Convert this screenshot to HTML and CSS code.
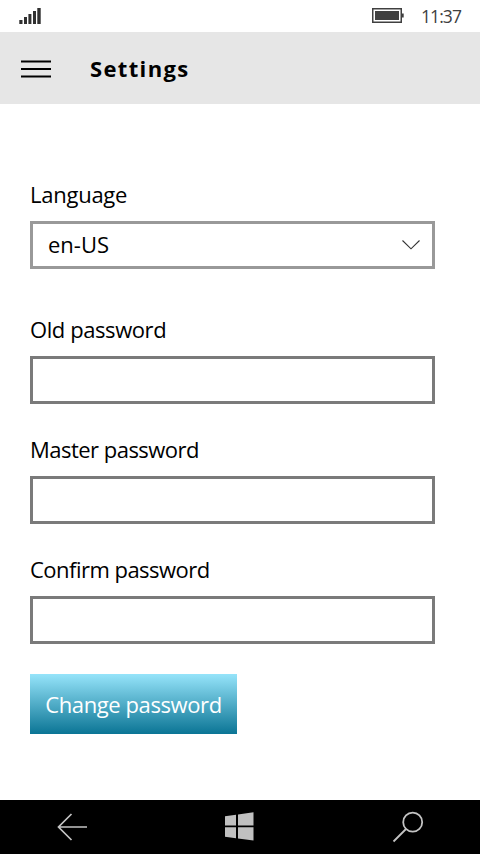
FILE: index.html
```html
<!DOCTYPE html>
<html lang="en-US">
<head>
<meta charset="utf-8">
<title>Settings</title>
<link rel="stylesheet" href="styles.css">
</head>
<body>
<div class="phone">
  <div class="status">
    <svg class="signal" width="23" height="18" viewBox="0 0 23 18" fill="#303030"><path d="M.3 13h3.200v4H.3zM5 10h3v7H5zM9.400 7h3v10h-3zM14 4h3v13h-3zM18.300 1h3.400v16h-3.400z"/></svg>
    <svg class="battery" width="32" height="16" viewBox="0 0 32 16"><path d="M.75.75h28.500v13.500H.75z" fill="none" stroke="#404040" stroke-width="1.500"/><path d="M3 3h24v9H3zM30 5.500h1.700v4H30z" fill="#404040"/></svg>
    <span class="clock">11:37</span>
  </div>
  <header class="header">
    <svg class="menu" width="30" height="20" viewBox="0 0 30 20" stroke="#000" stroke-width="2"><path d="M0 2.500h30M0 10h30M0 17.500h30"/></svg>
    <h1 class="title">Settings</h1>
  </header>
  <main class="form">
    <div class="field field-language">
      <label class="label l-language">Language</label>
      <div class="select"><span class="value">en-US</span>
        <svg width="20" height="12" viewBox="0 0 20 12" fill="none" stroke="#333" stroke-width="1.100"><path d="M1.500 1.500 10 9.800l8.500-8.300"/></svg>
      </div>
    </div>
    <div class="field"><label class="label l-old" for="old">Old password</label><input class="input" id="old" type="password"></div>
    <div class="field"><label class="label l-master" for="master">Master password</label><input class="input" id="master" type="password"></div>
    <div class="field"><label class="label l-confirm" for="confirm">Confirm password</label><input class="input" id="confirm" type="password"></div>
    <button class="button" type="button">Change password</button>
  </main>
  <nav class="navbar">
    <svg width="32" height="30" viewBox="0 0 32 30" fill="none" stroke="#c4c4c4" stroke-width="1.700"><path d="M30 15H1.500M14.500 2 1.500 15l13 13"/></svg>
    <svg class="win" width="30" height="30" viewBox="0 0 30 30" fill="#c0c0c0"><path d="M1 4.300 12 2.800V13.500H1zM14 2.500 29.500.3V13.500H14zM1 15.300h11v10.900L1 24.700zM14 15.300h15.500V28.500L14 26.500z"/></svg>
    <svg width="32" height="32" viewBox="0 0 32 32" fill="none" stroke="#c4c4c4" stroke-width="1.800"><circle cx="20.700" cy="11.200" r="9.500"/><path d="M14 18 1.500 30.500"/></svg>
  </nav>
</div>
</body>
</html>
```
FILE: styles.css
```css
* { box-sizing: border-box; }
body { margin: 0; background: #fff; color: #000; font-family: "Open Sans", "Noto Sans", sans-serif; }
svg { display: block; flex: none; }
.phone { display: flex; flex-direction: column; width: 480px; height: 854px; }
.status { display: flex; align-items: center; height: 32px; padding: 0 18px 0 19px; color: #404040; }
.battery { margin: 0 0 0 auto; }
.clock { width: 41px; margin-left: 17px; font-size: 19px; line-height: 32px; letter-spacing: -1px; white-space: nowrap; transform: scaleX(.92); transform-origin: 0 50%; }
.header { display: flex; align-items: center; height: 72px; padding: 0 21px; background: #e6e6e6; }
.menu { margin-top: 2px; }
.title { margin: 0 0 0 39px; font-size: 22px; line-height: 30px; font-weight: 700; letter-spacing: 1.350px; }
.form { flex: 1; padding: 75px 45px 0 30px; }
.field { height: 120px; }
.field-language { height: 135px; }
.label { display: block; height: 42px; font-size: 22px; line-height: 30px; white-space: nowrap; }
.l-language { letter-spacing: -.25px; }
.l-old { letter-spacing: -.42px; }
.l-master, .l-confirm { letter-spacing: -.52px; }
.select { display: flex; align-items: center; justify-content: space-between; height: 48px; padding: 0 11px 0 15px; border: 3px solid #999; }
.value { padding-bottom: 2px; font-size: 22px; line-height: 30px; }
.input { display: block; width: 100%; height: 48px; padding: 0 12px; border: 3px solid #7a7a7a; border-radius: 0; background: #fff; outline: none; font: inherit; }
.button { display: block; width: 207px; height: 60px; padding: 0; border: 0; background: linear-gradient(#96e4fa, #0b7595); color: #fff; font: 22px/30px "Open Sans", "Noto Sans", sans-serif; letter-spacing: -.4px; white-space: nowrap; }
.navbar { display: flex; align-items: center; justify-content: space-between; height: 54px; padding: 0 56px 0 57px; background: #000; }
.win { margin-right: 3px; }
```
